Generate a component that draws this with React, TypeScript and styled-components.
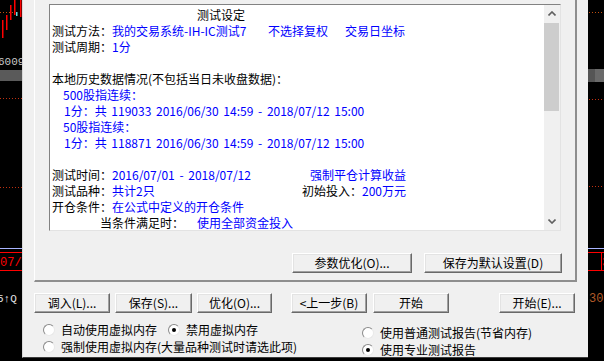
import React, { FC } from 'react';
import styled, { createGlobalStyle } from 'styled-components';

const GlobalStyle = createGlobalStyle`
  html, body {
    margin: 0;
    padding: 0;
    background: #000;
    overflow: hidden;
  }
  body {
    font-family: "Noto Sans CJK SC", "Liberation Sans", sans-serif;
    font-size: 12px;
  }
`;

const Screen = styled.div`
  display: flex;
  width: 604px;
  height: 361px;
  background: #000;
`;

const ChartStrip = styled.div<{ $w: number }>`
  width: ${(p) => p.$w}px;
  flex: none;
  height: 361px;
  svg {
    display: block;
  }
`;

const Dialog = styled.div`
  flex: none;
  width: 566px;
  height: 358px;
  box-sizing: border-box;
  background: #f0f0f0;
  border-left: 1px solid #d8d8d8;
  border-bottom: 1px solid #3c3c3c;
  padding-left: 11px;
  display: flex;
  flex-direction: column;
`;

const Panel = styled.div`
  width: 543px;
  box-sizing: border-box;
  border-left: 1px solid #fff;
  border-right: 2px solid #8e8e8e;
  border-bottom: 2px solid #8e8e8e;
  padding: 4px 0 7px 14px;
`;

const TextBox = styled.div`
  width: 512px;
  height: 227px;
  box-sizing: border-box;
  background: #fff;
  border-top: 1px solid #828282;
  border-left: 1px solid #828282;
  border-right: 1px solid #e3e3e3;
  border-bottom: 1px solid #e3e3e3;
  display: flex;
`;

const TextArea = styled.div`
  flex: 1;
  padding: 2px 0 0 2px;
  color: #000;
  word-spacing: 2px;
  overflow: hidden;
`;

const Line = styled.div<{ $indent?: number }>`
  height: 16px;
  line-height: 16px;
  white-space: pre;
  padding-left: ${(p) => p.$indent ?? 0}px;
`;

const SplitLine = styled(Line)`
  width: 354px;
  display: flex;
  justify-content: space-between;
`;

const Cell = styled.span<{ $w?: number; $blue?: boolean }>`
  display: inline-block;
  width: ${(p) => (p.$w ? `${p.$w}px` : 'auto')};
  color: ${(p) => (p.$blue ? '#0000ff' : '#000')};
`;

const Blue = styled.span`
  color: #0000ff;
`;

const ScrollBar = styled.div`
  width: 16px;
  flex: none;
  background: #f0f0f0;
  display: flex;
  flex-direction: column;
`;

const ScrollArrow = styled.div`
  height: 17px;
  display: flex;
  align-items: center;
  justify-content: center;
`;

const Thumb = styled.div`
  height: 88px;
  margin: 1px 1px 0 0;
  background: #cdcdcd;
`;

const Track = styled.div`
  flex: 1;
`;

const ButtonRow = styled.div<{ $top: number; $end?: boolean }>`
  display: flex;
  justify-content: ${(p) => (p.$end ? 'flex-end' : 'flex-start')};
  margin-top: ${(p) => p.$top}px;
  padding-right: ${(p) => (p.$end ? 13 : 0)}px;
`;

const Button = styled.button<{ $w: number; $ml?: number }>`
  width: ${(p) => p.$w}px;
  height: 20px;
  margin: 0 0 0 ${(p) => p.$ml ?? 0}px;
  padding: 0;
  box-sizing: border-box;
  background: #f0f0f0;
  font-family: "Noto Sans CJK SC", "Liberation Sans", sans-serif;
  font-size: 12px;
  line-height: 16px;
  color: #000;
  border: 1px solid;
  border-color: #fff #696969 #696969 #fff;
  box-shadow: inset -1px -1px #a0a0a0, inset 1px 1px #e3e3e3;
  white-space: pre;
`;

const OptionArea = styled.div`
  display: flex;
  margin-top: 8px;
  padding-left: 9px;
`;

const OptionCol = styled.div<{ $w?: number; $top?: number }>`
  width: ${(p) => (p.$w ? `${p.$w}px` : 'auto')};
  margin-top: ${(p) => p.$top ?? 0}px;
  display: flex;
  flex-direction: column;
`;

const OptionRow = styled.div`
  display: flex;
  align-items: center;
  height: 17px;
`;

const Option = styled.label<{ $w?: number }>`
  display: flex;
  align-items: center;
  gap: 6px;
  width: ${(p) => (p.$w ? `${p.$w}px` : 'auto')};
  white-space: nowrap;
  line-height: 12px;
`;

const RadioDot = styled.span<{ $on?: boolean }>`
  width: 12px;
  height: 12px;
  box-sizing: border-box;
  border-radius: 50%;
  border: 1px solid;
  border-color: #8a8a8a #e8e8e8 #e8e8e8 #8a8a8a;
  background: #fff;
  display: flex;
  align-items: center;
  justify-content: center;
  flex: none;
  &::after {
    content: '';
    width: 4px;
    height: 4px;
    border-radius: 50%;
    background: ${(p) => (p.$on ? '#000' : 'transparent')};
  }
`;

const Radio: FC<{ on?: boolean; text: string; w?: number }> = ({ on, text, w }) => (
  <Option $w={w}>
    <RadioDot $on={on} />
    <span>{text}</span>
  </Option>
);

const Chevron: FC<{ up?: boolean }> = ({ up }) => (
  <svg width="8" height="5" viewBox="0 0 8 5">
    <polyline
      points={up ? '0.5,4.5 4,1 7.5,4.5' : '0.5,0.5 4,4 7.5,0.5'}
      fill="none"
      stroke="#606060"
      strokeWidth="1.6"
    />
  </svg>
);

const Dots: FC<{ y: number; w: number; color: string; x0?: number }> = ({ y, w, color, x0 = 0 }) => (
  <line x1={x0} y1={y + 0.5} x2={w} y2={y + 0.5} stroke={color} strokeDasharray="1 2" />
);

const LeftChart: FC = () => (
  <svg width="22" height="361" viewBox="0 0 22 361">
    <rect width="22" height="361" fill="#000" />
    <Dots y={12} w={13} color="#c05010" />
    <rect x="2" y="20" width="1.5" height="18" fill="#ff0000" />
    <rect x="6" y="15" width="1.5" height="15" fill="#ff0000" />
    <rect x="10" y="5" width="1.5" height="15" fill="#ff0000" />
    <rect x="14" y="0" width="1.5" height="15" fill="#ff0000" />
    <rect x="16" y="12" width="1.5" height="4" fill="#60e0e0" />
    <rect x="20" y="0" width="1.5" height="17" fill="#ff0000" />
    <text x="-2" y="65" fill="#c8c8c8" fontFamily="Liberation Mono, monospace" fontSize="11">6009</text>
    <rect x="0" y="70" width="22" height="11" fill="#5a5a5a" />
    <Dots y={98} w={22} color="#c03010" />
    <Dots y={187} w={22} color="#c03010" />
    <line x1="0" y1="248.5" x2="22" y2="248.5" stroke="#a8b4ff" />
    <line x1="0" y1="252.5" x2="22" y2="252.5" stroke="#ff0000" />
    <line x1="0" y1="270.5" x2="22" y2="270.5" stroke="#ff0000" />
    <text x="0" y="266" fill="#ff0000" fontFamily="Liberation Mono, monospace" fontSize="12">07/</text>
    <text x="-3" y="302" fill="#e0e0e0" fontFamily="Liberation Mono, monospace" fontSize="11">5↑Q</text>
  </svg>
);

const RightChart: FC = () => (
  <svg width="16" height="361" viewBox="0 0 16 361">
    <rect width="16" height="361" fill="#000" />
    <Dots y={12} w={16} color="#c05010" x0={1} />
    <rect x="0" y="69" width="7" height="13" fill="#555" />
    <rect x="7" y="69" width="9" height="13" fill="#6a6a6a" />
    <Dots y={99} w={16} color="#c03010" x0={1} />
    <Dots y={186} w={16} color="#c03010" x0={1} />
    <line x1="0" y1="248.5" x2="16" y2="248.5" stroke="#a8b4ff" />
    <line x1="0" y1="252.5" x2="16" y2="252.5" stroke="#ff0000" />
    <line x1="0" y1="270.5" x2="16" y2="270.5" stroke="#ff0000" />
    <line x1="13.5" y1="252" x2="13.5" y2="271" stroke="#ff0000" />
    <text x="14" y="266" fill="#ff0000" fontFamily="Liberation Mono, monospace" fontSize="12">3</text>
    <text x="1" y="302" fill="#b05a28" fontFamily="Liberation Mono, monospace" fontSize="12">30</text>
  </svg>
);

const App: FC = () => {
  return (
    <>
      <GlobalStyle />
      <Screen>
        <ChartStrip $w={22}>
          <LeftChart />
        </ChartStrip>
        <Dialog>
          <Panel>
            <TextBox>
              <TextArea>
                <Line $indent={145}>测试设定</Line>
                <Line>
                  <Cell $w={60}>测试方法：</Cell>
                  <Cell $w={156} $blue>我的交易系统-IH-IC测试7</Cell>
                  <Cell $w={77} $blue>不选择复权</Cell>
                  <Cell $blue>交易日坐标</Cell>
                </Line>
                <Line>
                  测试周期：<Blue>1分</Blue>
                </Line>
                <Line />
                <Line>本地历史数据情况(不包括当日未收盘数据)：</Line>
                <Line $indent={11}>
                  <Blue>500股指连续：</Blue>
                </Line>
                <Line $indent={12}>
                  <Blue>1分：共 119033 2016/06/30 14:59 - 2018/07/12 15:00</Blue>
                </Line>
                <Line $indent={11}>
                  <Blue>50股指连续：</Blue>
                </Line>
                <Line $indent={12}>
                  <Blue>1分：共 118871 2016/06/30 14:59 - 2018/07/12 15:00</Blue>
                </Line>
                <Line />
                <SplitLine>
                  <span>
                    测试时间：<Blue>2016/07/01 - 2018/07/12</Blue>
                  </span>
                  <Blue>强制平仓计算收益</Blue>
                </SplitLine>
                <SplitLine>
                  <span>
                    测试品种：<Blue>共计2只</Blue>
                  </span>
                  <span>
                    初始投入：<Blue>200万元</Blue>
                  </span>
                </SplitLine>
                <Line>
                  开仓条件：<Blue>在公式中定义的开仓条件</Blue>
                </Line>
                <Line $indent={48}>
                  <Cell $w={97}>当条件满足时：</Cell>
                  <Cell $blue>使用全部资金投入</Cell>
                </Line>
              </TextArea>
              <ScrollBar>
                <ScrollArrow>
                  <Chevron up />
                </ScrollArrow>
                <Thumb />
                <Track />
                <ScrollArrow>
                  <Chevron />
                </ScrollArrow>
              </ScrollBar>
            </TextBox>
            <ButtonRow $top={22} $end>
              <Button $w={120}>参数优化(O)...</Button>
              <Button $w={138} $ml={12}>保存为默认设置(D)</Button>
            </ButtonRow>
          </Panel>
          <ButtonRow $top={11}>
            <Button $w={76}>调入(L)...</Button>
            <Button $w={77} $ml={5}>保存(S)...</Button>
            <Button $w={75} $ml={5}>优化(O)...</Button>
            <Button $w={76} $ml={19}>&lt;上一步(B)</Button>
            <Button $w={76} $ml={6}>开始</Button>
            <Button $w={76} $ml={50}>开始(E)...</Button>
          </ButtonRow>
          <OptionArea>
            <OptionCol $w={319}>
              <OptionRow>
                <Radio text="自动使用虚拟内存" w={125} />
                <Radio on text="禁用虚拟内存" />
              </OptionRow>
              <OptionRow>
                <Radio text="强制使用虚拟内存(大量品种测试时请选此项)" />
              </OptionRow>
            </OptionCol>
            <OptionCol $top={3}>
              <OptionRow>
                <Radio text="使用普通测试报告(节省内存)" />
              </OptionRow>
              <OptionRow>
                <Radio on text="使用专业测试报告" />
              </OptionRow>
            </OptionCol>
          </OptionArea>
        </Dialog>
        <ChartStrip $w={16}>
          <RightChart />
        </ChartStrip>
      </Screen>
    </>
  );
};

export default App;
